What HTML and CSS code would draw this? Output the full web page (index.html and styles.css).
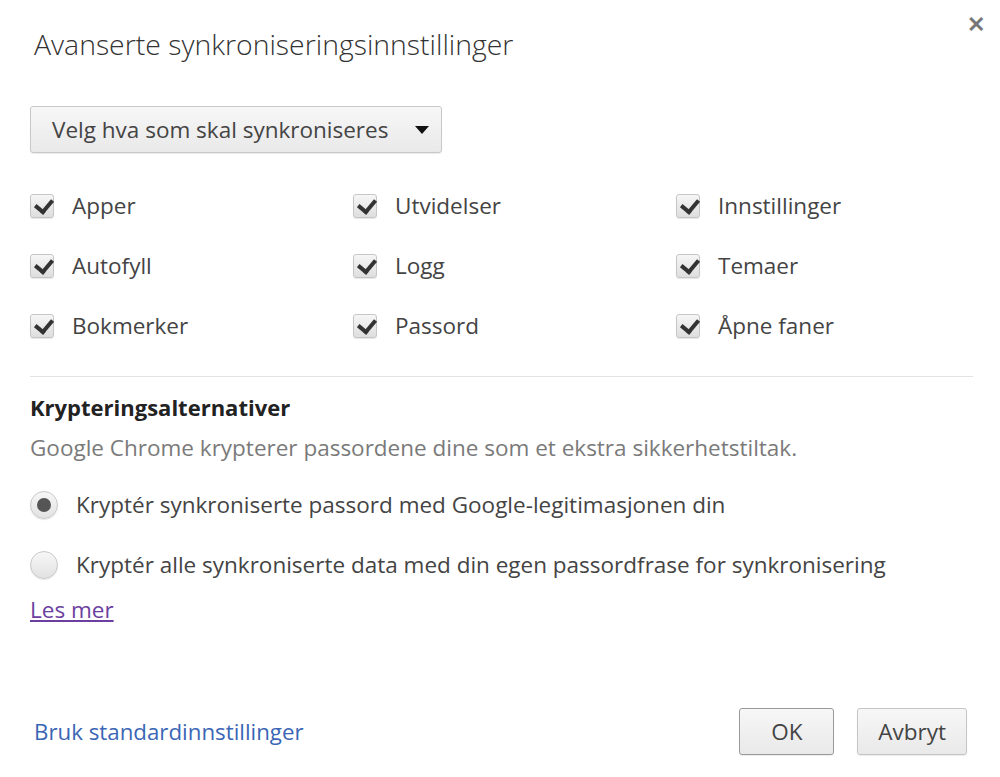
FILE: index.html
```html
<!DOCTYPE html>
<html lang="nb">
  <head>
    <meta charset="UTF-8" />
    <title>Avanserte synkroniseringsinnstillinger</title>
    <link rel="stylesheet" href="styles.css">
  </head>
  <body>
    <div class="dialog">
      <button class="close-btn" aria-label="Lukk">&#x2715;</button>
      <h1 class="title">Avanserte synkroniseringsinnstillinger</h1>

      <!-- SYNC SELECT -->
      <div class="select-row">
        <button class="select-btn">
          <span>Velg hva som skal synkroniseres</span>
          <span class="arrow"></span>
        </button>
      </div>

      <div class="sync-grid">
        <label class="check"><span class="box"></span>Apper</label>
        <label class="check"><span class="box"></span>Utvidelser</label>
        <label class="check"><span class="box"></span>Innstillinger</label>
        <label class="check"><span class="box"></span>Autofyll</label>
        <label class="check"><span class="box"></span>Logg</label>
        <label class="check"><span class="box"></span>Temaer</label>
        <label class="check"><span class="box"></span>Bokmerker</label>
        <label class="check"><span class="box"></span>Passord</label>
        <label class="check"><span class="box"></span>Åpne faner</label>
      </div>

      <hr class="divider" />

      <!-- ENCRYPTION -->
      <h2 class="section-title">Krypteringsalternativer</h2>
      <p class="note">Google Chrome krypterer passordene dine som et ekstra sikkerhetstiltak.</p>
      <label class="radio"><span class="dot checked"></span>Kryptér synkroniserte passord med Google-legitimasjonen din</label>
      <label class="radio"><span class="dot"></span>Kryptér alle synkroniserte data med din egen passordfrase for synkronisering</label>
      <a class="more" href="#">Les mer</a>

      <div class="footer">
        <a class="reset" href="#">Bruk standardinnstillinger</a>
        <div class="actions">
          <button class="btn ok">OK</button>
          <button class="btn">Avbryt</button>
        </div>
      </div>
    </div>
  </body>
</html>
```

FILE: styles.css
```css
* {
  box-sizing: border-box;
}

body {
  margin: 0;
  background: #fff;
  font-family: "Open Sans", "Noto Sans", sans-serif;
  color: #333;
}

.dialog {
  position: relative;
  height: 777px;
  padding: 0 27px 0 30px;
  display: flex;
  flex-direction: column;
}

.close-btn {
  position: absolute;
  top: 12px;
  right: 15px;
  border: none;
  background: none;
  color: #777;
  font-size: 22px;
  font-weight: 700;
  line-height: 26px;
  padding: 0;
  cursor: pointer;
}

.title {
  margin: 26px 0 0 4px;
  font-size: 28.4px;
  font-weight: 300;
  color: #333;
  line-height: 36px;
}

.select-row {
  margin-top: 44px;
}

.select-btn {
  height: 47px;
  width: 412px;
  display: flex;
  align-items: center;
  justify-content: space-between;
  padding: 0 12px 0 21px;
  border: 1px solid #c8c8c8;
  border-radius: 3px;
  background: linear-gradient(#f7f7f7, #e9e9e9);
  box-shadow: 0 1px 1px rgba(0, 0, 0, 0.08);
  font-family: inherit;
  font-size: 22.5px;
  color: #444;
}

.arrow {
  width: 0;
  height: 0;
  border-left: 7px solid transparent;
  border-right: 7px solid transparent;
  border-top: 8px solid #111;
}

.sync-grid {
  margin-top: 36px;
  display: grid;
  grid-template-columns: 323px 323px 1fr;
  row-gap: 26px;
}

.check,
.radio {
  display: flex;
  align-items: center;
  font-size: 22.5px;
  color: #444;
  line-height: 34px;
}

.box {
  width: 24px;
  height: 24px;
  margin-right: 18px;
  border: 1px solid #c6c6c6;
  border-radius: 3px;
  background: linear-gradient(#f6f6f6, #dedede);
  box-shadow: 0 1px 1px rgba(0, 0, 0, 0.1);
  position: relative;
}

.box::after {
  content: "";
  position: absolute;
  left: 7px;
  top: 1px;
  width: 8px;
  height: 13px;
  border-right: 4px solid #333;
  border-bottom: 4px solid #333;
  transform: rotate(40deg);
}

.divider {
  margin: 33px 0 0;
  border: none;
  border-top: 1px solid #e3e3e3;
}

.section-title {
  margin: 16px 0 0;
  font-size: 22px;
  font-weight: 700;
  color: #222;
  line-height: 28px;
}

.note {
  margin: 12px 0 0;
  font-size: 22.5px;
  color: #7a7a7a;
  line-height: 30px;
}

.radio {
  margin-top: 25px;
}

.radio + .radio {
  margin-top: 26px;
}

.dot {
  width: 28px;
  height: 28px;
  margin-right: 18px;
  border-radius: 50%;
  border: 1px solid #c9c9c9;
  background: linear-gradient(#f7f7f7, #e2e2e2);
  box-shadow: 0 1px 1px rgba(0, 0, 0, 0.1);
  display: flex;
  align-items: center;
  justify-content: center;
}

.dot.checked::after {
  content: "";
  width: 14px;
  height: 14px;
  border-radius: 50%;
  background: #555;
}

.more {
  margin-top: 14px;
  align-self: flex-start;
  font-size: 22.5px;
  color: #6b3fa0;
  line-height: 28px;
}

.footer {
  margin-top: auto;
  margin-bottom: 22px;
  padding-right: 6px;
  display: flex;
  justify-content: space-between;
  align-items: center;
}

.reset {
  margin-left: 4px;
  font-size: 22.3px;
  color: #3b66b5;
  text-decoration: none;
}

.actions {
  display: flex;
  gap: 23px;
}

.btn {
  height: 47px;
  min-width: 95px;
  padding: 0 20px;
  border: 1px solid #c5c5c5;
  border-radius: 3px;
  background: linear-gradient(#f7f7f7, #e9e9e9);
  box-shadow: 0 1px 1px rgba(0, 0, 0, 0.08);
  font-family: inherit;
  font-size: 22.5px;
  color: #444;
}

.btn.ok {
  border-color: #9a9a9a;
}
```
